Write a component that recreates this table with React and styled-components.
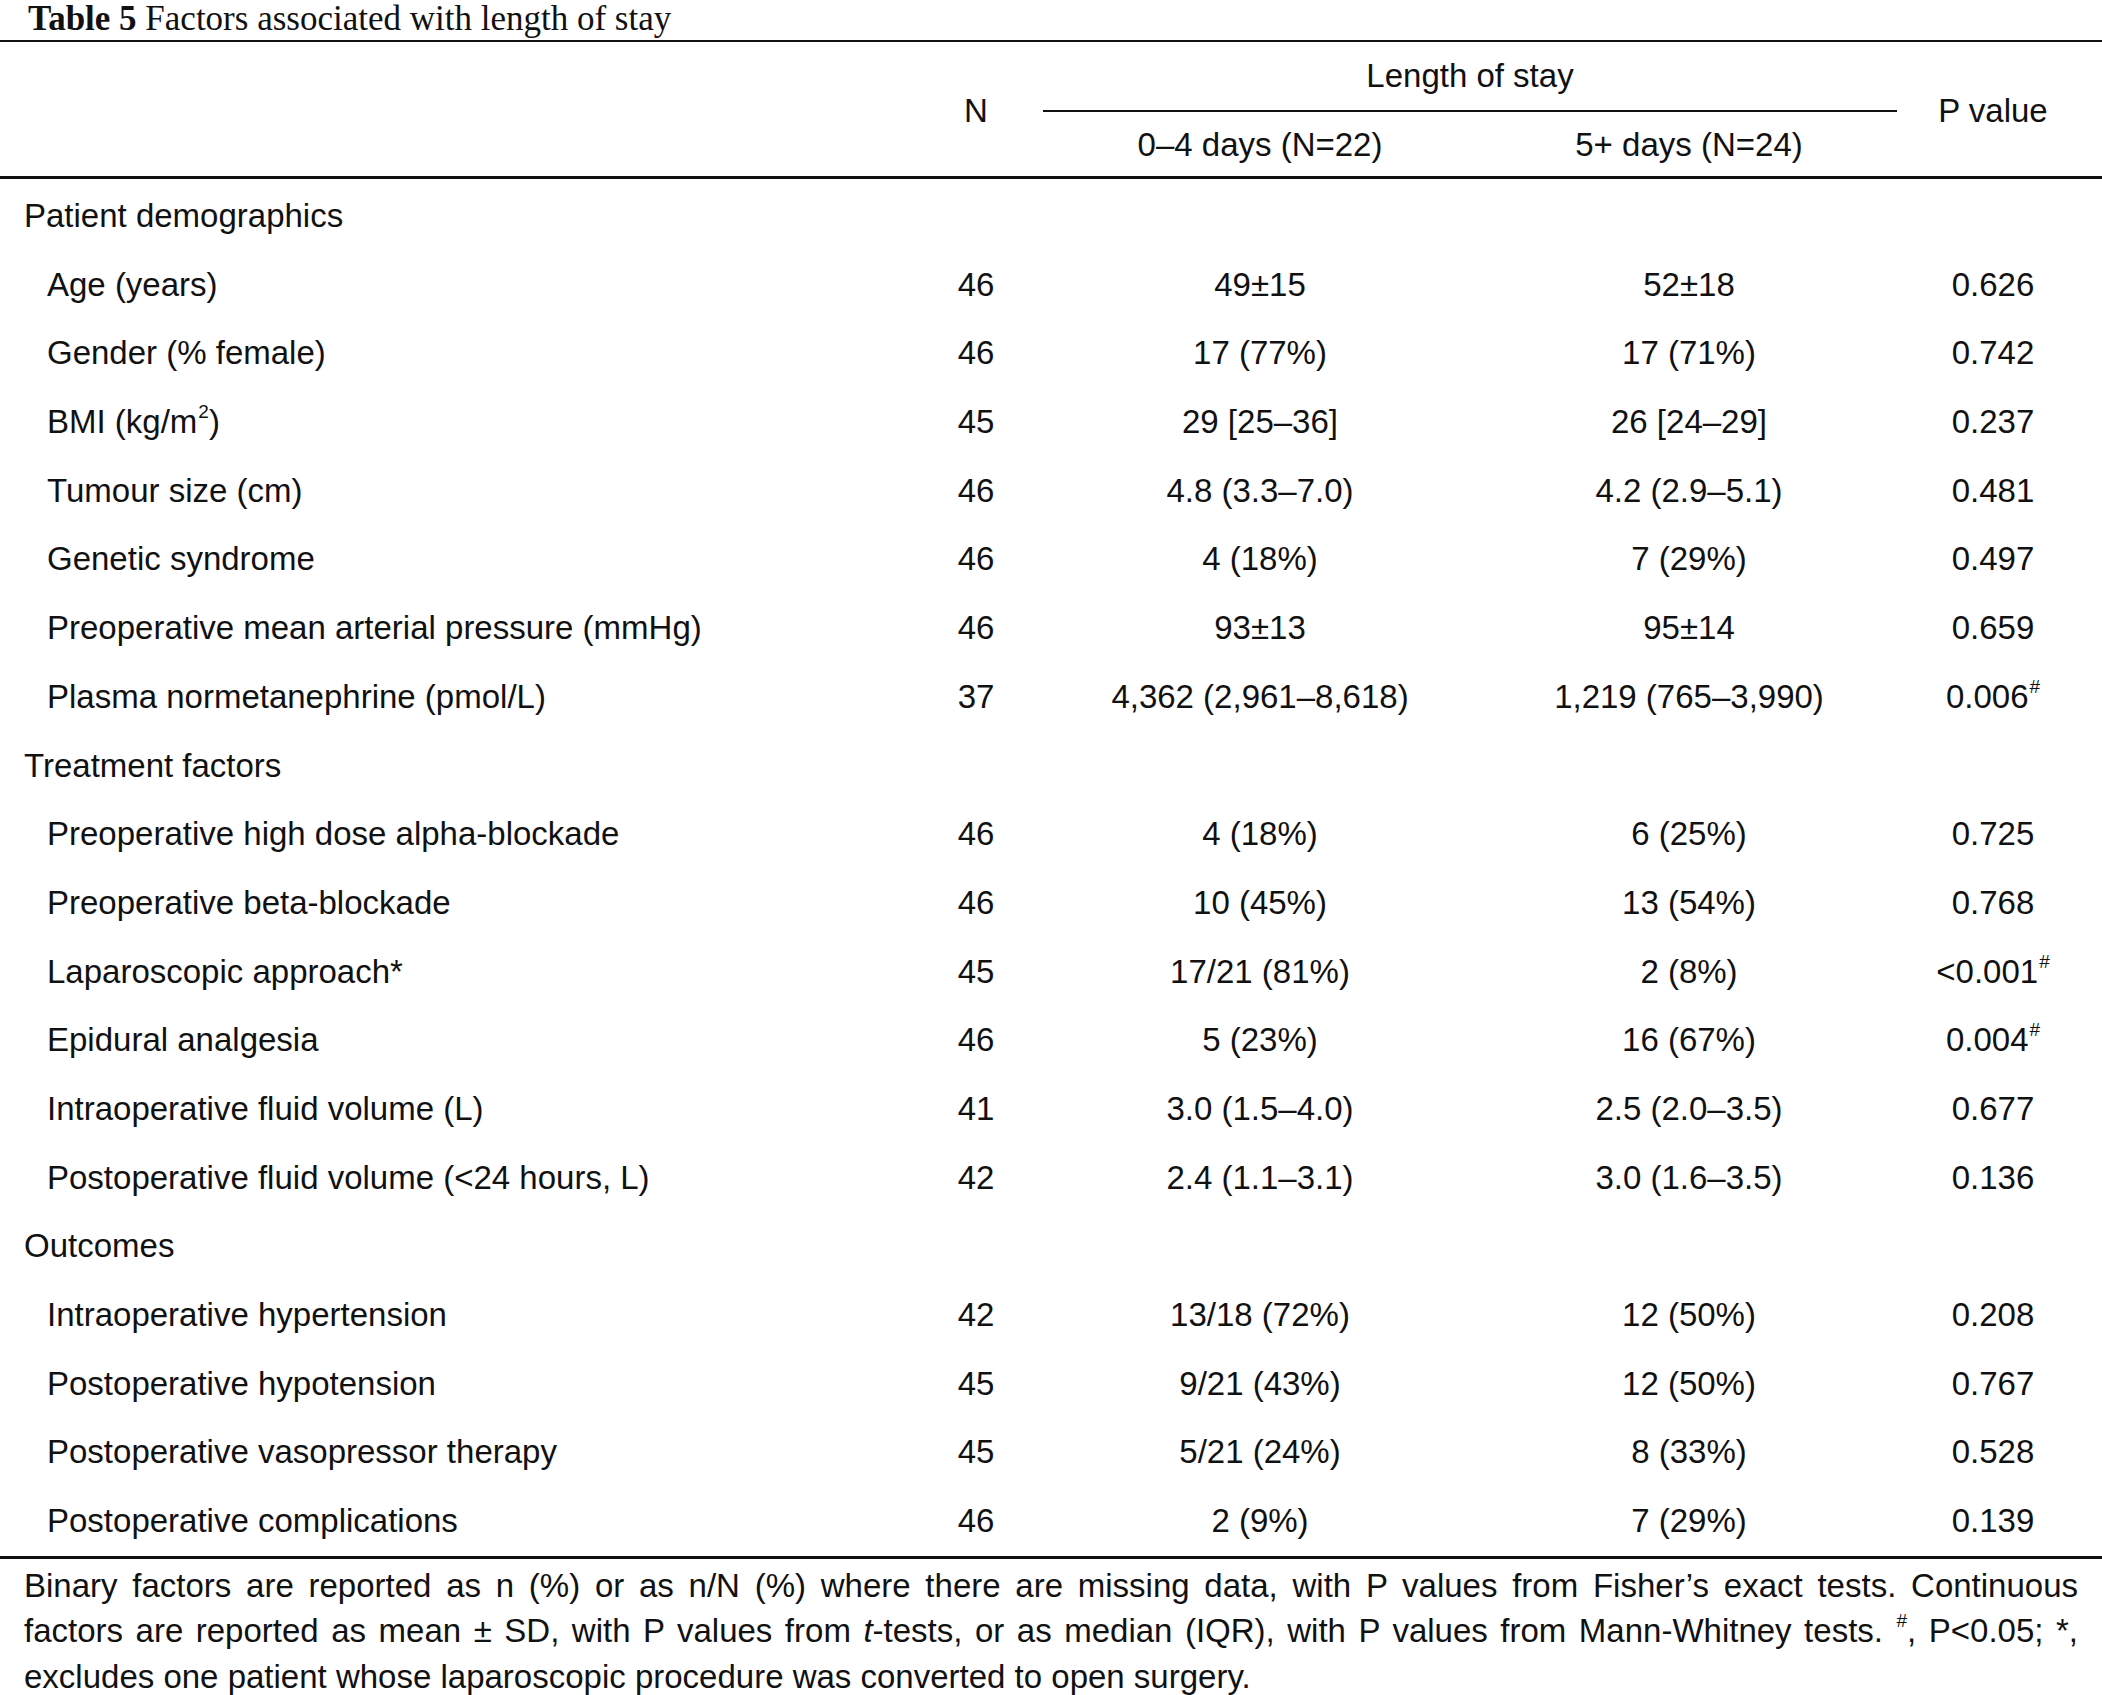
import React from 'react';
import styled, { createGlobalStyle } from 'styled-components';

const GlobalStyle = createGlobalStyle`
  html, body {
    margin: 0;
    padding: 0;
    background: #ffffff;
  }
  body {
    font-family: "Liberation Sans", Arial, sans-serif;
    color: #111111;
  }
`;

const Page = styled.div`
  width: 2102px;
  background: #ffffff;
`;

const Caption = styled.div`
  font-family: "Liberation Serif", "Times New Roman", serif;
  font-size: 35px;
  line-height: 38px;
  height: 40px;
  padding-left: 28px;
  color: #111111;
  white-space: nowrap;

  b {
    font-weight: 700;
  }
`;

const Rule = styled.div`
  height: ${(props) => props.$h || 2}px;
  background: #111111;
`;

const Grid = styled.div`
  display: grid;
  grid-template-columns: 920px 112px 456px 402px 206px;
  font-size: 33px;
  align-items: center;
  padding-top: ${(props) => props.$pad || 0}px;
`;

const HeadCell = styled.div`
  text-align: center;
  grid-row: ${(props) => props.$row || 'auto'};
  grid-column: ${(props) => props.$col || 'auto'};
  padding-top: 4px;
`;

const Spanner = styled.div`
  grid-column: 3 / 5;
  grid-row: 1;
  display: flex;
  flex-direction: column;
  align-items: stretch;
  padding-top: 11px;
`;

const SpanTitle = styled.div`
  text-align: center;
  height: 46px;
  line-height: 46px;
  margin-left: 11px;
  margin-right: -7px;
`;

const SpanLine = styled.div`
  height: 2px;
  background: #111111;
  margin: 11px -7px 0 11px;
`;

const SubHead = styled.div`
  text-align: center;
  grid-row: 2;
  grid-column: ${(props) => props.$col};
  height: 64px;
  line-height: 66px;
`;

const Row = styled.div`
  display: contents;
`;

const Cell = styled.div`
  height: 68.7px;
  line-height: 68.7px;
  white-space: nowrap;
  text-align: ${(props) => (props.$label ? 'left' : 'center')};
  padding-left: ${(props) => (props.$label ? (props.$group ? 24 : 47) : 0)}px;
`;

const Sup = styled.sup`
  font-size: 19px;
  vertical-align: 15px;
  line-height: 0;
  margin-left: 1px;
`;

const Notes = styled.div`
  padding: 4px 24px 0 24px;
  font-size: 33px;
  line-height: 45.6px;
`;

const NoteLine = styled.div`
  text-align: ${(props) => (props.$last ? 'left' : 'justify')};
  text-align-last: ${(props) => (props.$last ? 'left' : 'justify')};
  white-space: nowrap;
`;

const rows = [
  { group: 'Patient demographics' },
  { label: 'Age (years)', n: '46', a: '49±15', b: '52±18', p: '0.626' },
  { label: 'Gender (% female)', n: '46', a: '17 (77%)', b: '17 (71%)', p: '0.742' },
  { label: 'BMI (kg/m', sq: true, n: '45', a: '29 [25–36]', b: '26 [24–29]', p: '0.237' },
  { label: 'Tumour size (cm)', n: '46', a: '4.8 (3.3–7.0)', b: '4.2 (2.9–5.1)', p: '0.481' },
  { label: 'Genetic syndrome', n: '46', a: '4 (18%)', b: '7 (29%)', p: '0.497' },
  { label: 'Preoperative mean arterial pressure (mmHg)', n: '46', a: '93±13', b: '95±14', p: '0.659' },
  { label: 'Plasma normetanephrine (pmol/L)', n: '37', a: '4,362 (2,961–8,618)', b: '1,219 (765–3,990)', p: '0.006', sig: true },
  { group: 'Treatment factors' },
  { label: 'Preoperative high dose alpha-blockade', n: '46', a: '4 (18%)', b: '6 (25%)', p: '0.725' },
  { label: 'Preoperative beta-blockade', n: '46', a: '10 (45%)', b: '13 (54%)', p: '0.768' },
  { label: 'Laparoscopic approach*', n: '45', a: '17/21 (81%)', b: '2 (8%)', p: '<0.001', sig: true },
  { label: 'Epidural analgesia', n: '46', a: '5 (23%)', b: '16 (67%)', p: '0.004', sig: true },
  { label: 'Intraoperative fluid volume (L)', n: '41', a: '3.0 (1.5–4.0)', b: '2.5 (2.0–3.5)', p: '0.677' },
  { label: 'Postoperative fluid volume (<24 hours, L)', n: '42', a: '2.4 (1.1–3.1)', b: '3.0 (1.6–3.5)', p: '0.136' },
  { group: 'Outcomes' },
  { label: 'Intraoperative hypertension', n: '42', a: '13/18 (72%)', b: '12 (50%)', p: '0.208' },
  { label: 'Postoperative hypotension', n: '45', a: '9/21 (43%)', b: '12 (50%)', p: '0.767' },
  { label: 'Postoperative vasopressor therapy', n: '45', a: '5/21 (24%)', b: '8 (33%)', p: '0.528' },
  { label: 'Postoperative complications', n: '46', a: '2 (9%)', b: '7 (29%)', p: '0.139' },
];

export default function App() {
  return (
    <Page>
      <GlobalStyle />
      <Caption>
        <b>Table 5</b> Factors associated with length of stay
      </Caption>
      <Rule $h={2} />
      <Grid>
        <HeadCell $row="1 / 3" $col="1" />
        <HeadCell $row="1 / 3" $col="2">N</HeadCell>
        <Spanner>
          <SpanTitle>Length of stay</SpanTitle>
          <SpanLine />
        </Spanner>
        <HeadCell $row="1 / 3" $col="5">P value</HeadCell>
        <SubHead $col={3}>0–4 days (N=22)</SubHead>
        <SubHead $col={4}>5+ days (N=24)</SubHead>
      </Grid>
      <Rule $h={3} />
      <Grid $pad={3}>
        {rows.map((r, i) =>
          r.group ? (
            <Row key={i}>
              <Cell $label $group>{r.group}</Cell>
              <Cell />
              <Cell />
              <Cell />
              <Cell />
            </Row>
          ) : (
            <Row key={i}>
              <Cell $label>
                {r.label}
                {r.sq && (
                  <>
                    <Sup>2</Sup>)
                  </>
                )}
              </Cell>
              <Cell>{r.n}</Cell>
              <Cell>{r.a}</Cell>
              <Cell>{r.b}</Cell>
              <Cell>
                {r.p}
                {r.sig && <Sup>#</Sup>}
              </Cell>
            </Row>
          )
        )}
      </Grid>
      <Rule $h={3} />
      <Notes>
        <NoteLine>
          Binary factors are reported as n (%) or as n/N (%) where there are missing data, with P values from Fisher’s exact tests. Continuous
        </NoteLine>
        <NoteLine>
          factors are reported as mean ± SD, with P values from <i>t</i>-tests, or as median (IQR), with P values from Mann-Whitney tests. <Sup>#</Sup>, P&lt;0.05; *,
        </NoteLine>
        <NoteLine $last>excludes one patient whose laparoscopic procedure was converted to open surgery.</NoteLine>
      </Notes>
    </Page>
  );
}
